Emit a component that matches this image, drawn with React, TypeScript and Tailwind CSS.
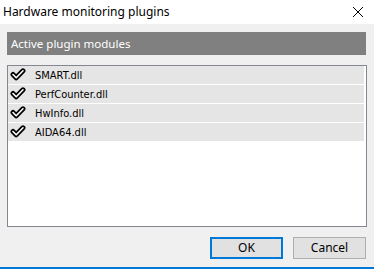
const plugins = ["SMART.dll", "PerfCounter.dll", "HwInfo.dll", "AIDA64.dll"];

const CheckIcon = () => (
  <svg width="16" height="14" viewBox="0 0 16 14" className="shrink-0">
    <path d="M3 6.5 L6.2 9.8 L13 2.8" fill="none" stroke="#000" strokeWidth="5" strokeLinecap="round" strokeLinejoin="round" />
    <path d="M3 6.5 L6.2 9.8 L13 2.8" fill="none" stroke="#fff" strokeWidth="1.6" strokeLinecap="round" strokeLinejoin="round" />
  </svg>
);

export default function App() {
  return (
    <div className="w-[374px] h-[269px] flex flex-col bg-[#f0f0f0] overflow-hidden" style={{ fontFamily: '"Noto Sans", sans-serif' }}>
      <div className="h-[24px] bg-white flex items-center justify-between pl-[3px] pr-[10px]">
        <span className="text-[12px] text-black leading-none">Hardware monitoring plugins</span>
        <svg width="12" height="12" viewBox="0 0 12 12">
          <path d="M1 1 L11 11 M11 1 L1 11" stroke="#000" strokeWidth="1" />
        </svg>
      </div>
      <div className="flex-1 flex flex-col px-[7px] pt-[8px]">
        <div className="h-[23px] w-[359px] bg-[#808080] flex items-center pl-[4px]">
          <span className="text-[11.5px] text-white leading-none">Active plugin modules</span>
        </div>
        <div className="mt-[10px] h-[162px] w-[360px] border border-[#828790] bg-white flex flex-col gap-px pr-[2px]">
          {plugins.map((p) => (
            <div key={p} className="h-[18px] bg-[#e5e5e5] flex items-center pl-[2px] gap-[9px]">
              <CheckIcon />
              <span className="text-[11px] text-black leading-none" style={{ fontFamily: '"DejaVu Sans Condensed", "DejaVu Sans", sans-serif' }}>{p}</span>
            </div>
          ))}
        </div>
        <div className="mt-[10px] flex justify-end gap-[10px] pr-[1px]">
          <button className="w-[73px] h-[22px] bg-[#e1e1e1] border-2 border-[#0078d7] text-[12px] text-black leading-none">OK</button>
          <button className="w-[73px] h-[22px] bg-[#e1e1e1] border border-[#adadad] text-[12px] text-black leading-none">Cancel</button>
        </div>
      </div>
      <div className="h-[2px] bg-[#0078d7]" />
    </div>
  );
}
